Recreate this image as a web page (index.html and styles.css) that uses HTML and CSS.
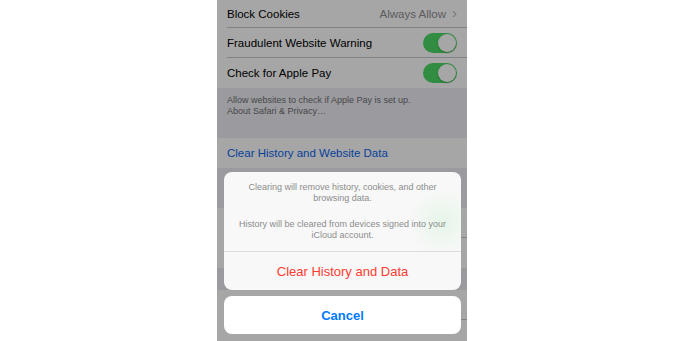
FILE: index.html
```html
<!DOCTYPE html>
<html lang="en">
<head>
    <meta charset="UTF-8">
    <meta name="viewport" content="width=device-width, initial-scale=1.0">
    <title>Safari Settings</title>
    <link rel="stylesheet" href="styles.css">
</head>
<body>
    <div class="phone">
        <div class="settings">
            <div class="group">
                <div class="row first">
                    <span class="label">Block Cookies</span>
                    <span class="detail">Always Allow <span class="chevron">&#8250;</span></span>
                </div>
                <div class="row">
                    <span class="label">Fraudulent Website Warning</span>
                    <span class="toggle"><span class="knob"></span></span>
                </div>
                <div class="row last">
                    <span class="label">Check for Apple Pay</span>
                    <span class="toggle"><span class="knob"></span></span>
                </div>
            </div>
            <div class="footer">
                Allow websites to check if Apple Pay is set up.<br>
                About Safari &amp; Privacy…
            </div>
            <div class="group">
                <div class="row last">
                    <span class="label link">Clear History and Website Data</span>
                </div>
            </div>
            <div class="gap"></div>
            <div class="group">
                <div class="row"></div>
                <div class="row last"></div>
            </div>
            <div class="gap small"></div>
            <div class="group">
                <div class="row"></div>
                <div class="row last"></div>
            </div>
        </div>

        <div class="dim">
            <div class="sheet">
                <div class="message">
                    <p>Clearing will remove history, cookies, and other browsing data.</p>
                    <p>History will be cleared from devices signed into your iCloud account.</p>
                </div>
                <button class="action destructive">Clear History and Data</button>
            </div>
            <button class="action cancel">Cancel</button>
        </div>
    </div>
</body>
</html>
```

FILE: styles.css
```css
body {
    margin: 0;
    padding: 0;
    background-color: #fff;
    font-family: "Liberation Sans", Arial, sans-serif;
}
.phone {
    position: relative;
    width: 250px;
    height: 341px;
    margin: 0 auto 0 217px;
    overflow: hidden;
    background-color: #efeff4;
}
.settings .group {
    background-color: #fff;
}
.settings .row {
    display: flex;
    align-items: center;
    justify-content: space-between;
    height: 30px;
    margin-left: 10px;
    padding-right: 10px;
    border-bottom: 1px solid #c8c7cc;
    box-sizing: border-box;
    font-size: 11.5px;
    color: #000;
}
.settings .row.first {
    height: 28px;
}
.settings .row.last {
    border-bottom: none;
}
.settings .detail {
    color: #8e8e93;
    display: flex;
    align-items: center;
    gap: 6px;
}
.settings .chevron {
    font-size: 15px;
    color: #b8b8bd;
    margin-top: -2px;
}
.settings .link {
    color: #0a66f0;
}
.toggle {
    position: relative;
    width: 34px;
    height: 20px;
    border-radius: 10px;
    background-color: #4cd964;
}
.toggle .knob {
    position: absolute;
    top: 1px;
    right: 1px;
    width: 18px;
    height: 18px;
    border-radius: 50%;
    background-color: #fff;
    box-shadow: 0 1px 2px rgba(0, 0, 0, 0.25);
}
.footer {
    height: 50px;
    box-sizing: border-box;
    padding: 7px 10px 0;
    font-size: 9px;
    line-height: 11px;
    color: #6d6d72;
}
.gap {
    height: 40px;
}
.gap.small {
    height: 22px;
}
.dim {
    position: absolute;
    top: 0;
    left: 0;
    right: 0;
    bottom: 0;
    background-color: rgba(0, 0, 0, 0.35);
    display: flex;
    flex-direction: column;
    justify-content: flex-end;
    padding: 0 6px 7px 7px;
}
.sheet {
    background-color: #f8f8f8;
    background-image: radial-gradient(circle at 92% 42%, rgba(225, 245, 228, 0.8), rgba(225, 245, 228, 0) 34px);
    border-radius: 8px;
    margin-bottom: 6px;
    overflow: hidden;
}
.message {
    height: 80px;
    box-sizing: border-box;
    padding: 10px 12px 0;
    border-bottom: 1px solid #dcdcdc;
    text-align: center;
    font-size: 9px;
    line-height: 11px;
    color: #8c8c8c;
}
.message p {
    margin: 0 0 15px;
}
.action {
    display: block;
    width: 100%;
    height: 38px;
    border: none;
    padding: 0;
    font-family: "Liberation Sans", Arial, sans-serif;
    font-size: 13px;
    background-color: transparent;
}
.action.destructive {
    color: #ff3b30;
}
.action.cancel {
    background-color: #fff;
    border-radius: 8px;
    color: #007aff;
    font-weight: bold;
}
```
